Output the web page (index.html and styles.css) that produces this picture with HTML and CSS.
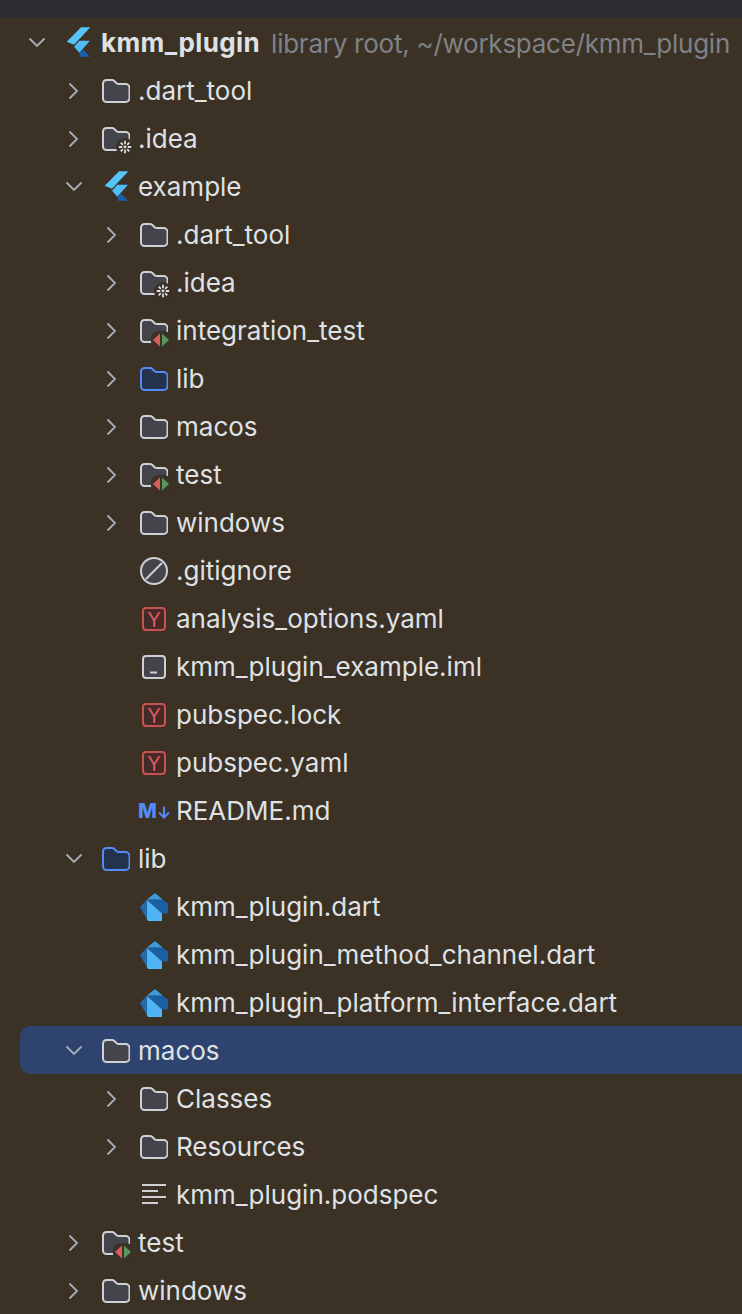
FILE: index.html
```html
<!DOCTYPE html>
<html lang="en">
<head>
<meta charset="utf-8">
<title>Project tree</title>
<link rel="stylesheet" href="styles.css">
</head>
<body>
<svg class="defs" aria-hidden="true">
  <symbol id="folder-shape" viewBox="0 0 28 24">
    <path d="M1 4.500a3.500 3.500 0 0 1 3.500-3.500h5.600a3 3 0 0 1 2 .8l2.600 2.400a3 3 0 0 0 2 .8h6.800a4 4 0 0 1 4 4V19a4 4 0 0 1-4 4H4.500A3.500 3.500 0 0 1 1 19.500z"/>
  </symbol>
  <symbol id="flutter" viewBox="0 0 28 32">
    <polygon class="fl-light" points="16,0.300 25.400,0.300 9,17.800 1.700,14.700"/>
    <polygon class="fl-mid" points="14.300,13.700 25,13.700 14.300,25.700 9,19.700"/>
    <polygon class="fl-dark" points="14.300,25.700 18.300,22.500 25,29.700 15,29.700"/>
  </symbol>
  <symbol id="dart" viewBox="0 0 28 28">
    <polygon class="d-top" points="6.700,6.700 15,0 23,6.700"/>
    <polygon class="d-right" points="6.700,6.700 23,6.700 28,10.500 28,20.500 22,20.500"/>
    <polygon class="d-light" points="6.700,6.700 22,20.500 22,28 8,28 6.700,26"/>
    <polygon class="d-left" points="0,14 6.700,6.700 6.700,26"/>
  </symbol>
  <symbol id="yaml" viewBox="0 0 24 24">
    <rect class="y-box" x="1" y="1" width="22" height="22" rx="3"/>
    <text class="y-letter" x="12" y="19.500">Y</text>
  </symbol>
  <symbol id="arrow-down" viewBox="0 0 24 24">
    <path d="M4.500 7.500l7.500 7.500 7.500-7.500"/>
  </symbol>
  <symbol id="arrow-right" viewBox="0 0 24 24">
    <path d="M7.500 4.500l7.500 7.500-7.500 7.500"/>
  </symbol>
  <symbol id="gear" viewBox="0 0 16 16">
    <circle class="cut" cx="8" cy="8" r="8"/>
    <circle class="hub" cx="8" cy="8" r="1.300"/>
    <path d="M8 2.500v3M8 10.500v3M2.500 8h3M10.500 8h3M4.200 4.200l1.900 1.900M9.900 9.900l1.900 1.900M11.800 4.200L9.900 6.100M6.100 9.900l-1.900 1.900"/>
  </symbol>
  <symbol id="test-badge" viewBox="0 0 20 18">
    <rect class="cut" x="0" y="0" width="20" height="18" rx="7"/>
    <polygon class="t-red" points="9,2.500 9,15.500 2,9"/>
    <polygon class="t-green" points="11,2.500 11,15.500 18,9"/>
  </symbol>
</svg>

<div class="topbar"></div>
<ul class="tree">
  <li class="row l0">
    <svg class="chev"><use href="#arrow-down"/></svg>
    <svg class="ico tall"><use href="#flutter"/></svg>
    <span class="name root">kmm_plugin</span><span class="hint">library root, ~/workspace/kmm_plugin</span>
  </li>
  <li class="row l1">
    <svg class="chev"><use href="#arrow-right"/></svg>
    <svg class="ico folder"><use href="#folder-shape"/></svg>
    <span class="name">.dart_tool</span>
  </li>
  <li class="row l1">
    <svg class="chev"><use href="#arrow-right"/></svg>
    <span class="ico-wrap">
      <svg class="ico folder"><use href="#folder-shape"/></svg>
      <svg class="badge-gear"><use href="#gear"/></svg>
    </span>
    <span class="name">.idea</span>
  </li>
  <li class="row l1">
    <svg class="chev"><use href="#arrow-down"/></svg>
    <svg class="ico tall nudge"><use href="#flutter"/></svg>
    <span class="name">example</span>
  </li>
  <li class="row l2">
    <svg class="chev"><use href="#arrow-right"/></svg>
    <svg class="ico folder"><use href="#folder-shape"/></svg>
    <span class="name">.dart_tool</span>
  </li>
  <li class="row l2">
    <svg class="chev"><use href="#arrow-right"/></svg>
    <span class="ico-wrap">
      <svg class="ico folder"><use href="#folder-shape"/></svg>
      <svg class="badge-gear"><use href="#gear"/></svg>
    </span>
    <span class="name">.idea</span>
  </li>
  <li class="row l2">
    <svg class="chev"><use href="#arrow-right"/></svg>
    <span class="ico-wrap">
      <svg class="ico folder"><use href="#folder-shape"/></svg>
      <svg class="badge-test"><use href="#test-badge"/></svg>
    </span>
    <span class="name">integration_test</span>
  </li>
  <li class="row l2">
    <svg class="chev"><use href="#arrow-right"/></svg>
    <svg class="ico folder src"><use href="#folder-shape"/></svg>
    <span class="name">lib</span>
  </li>
  <li class="row l2">
    <svg class="chev"><use href="#arrow-right"/></svg>
    <svg class="ico folder"><use href="#folder-shape"/></svg>
    <span class="name">macos</span>
  </li>
  <li class="row l2">
    <svg class="chev"><use href="#arrow-right"/></svg>
    <span class="ico-wrap">
      <svg class="ico folder"><use href="#folder-shape"/></svg>
      <svg class="badge-test"><use href="#test-badge"/></svg>
    </span>
    <span class="name">test</span>
  </li>
  <li class="row l2">
    <svg class="chev"><use href="#arrow-right"/></svg>
    <svg class="ico folder"><use href="#folder-shape"/></svg>
    <span class="name">windows</span>
  </li>
  <li class="row l2">
    <span class="chev"></span>
    <svg class="ico ignore" viewBox="0 0 28 28"><circle cx="14" cy="14" r="13"/><path d="M6 22L22 6"/></svg>
    <span class="name">.gitignore</span>
  </li>
  <li class="row l2">
    <span class="chev"></span>
    <span class="ico-center"><svg class="file"><use href="#yaml"/></svg></span>
    <span class="name">analysis_options.yaml</span>
  </li>
  <li class="row l2">
    <span class="chev"></span>
    <span class="ico-center"><svg class="file iml" viewBox="0 0 24 24"><rect x="1" y="1" width="22" height="22" rx="3"/><path d="M8 17.500h7"/></svg></span>
    <span class="name">kmm_plugin_example.iml</span>
  </li>
  <li class="row l2">
    <span class="chev"></span>
    <span class="ico-center"><svg class="file"><use href="#yaml"/></svg></span>
    <span class="name">pubspec.lock</span>
  </li>
  <li class="row l2">
    <span class="chev"></span>
    <span class="ico-center"><svg class="file"><use href="#yaml"/></svg></span>
    <span class="name">pubspec.yaml</span>
  </li>
  <li class="row l2">
    <span class="chev"></span>
    <span class="ico-md"><span class="md-m">M</span><svg class="md-arrow" viewBox="0 0 12 13"><path d="M6 .5v11M1 6.500l5 5 5-5"/></svg></span>
    <span class="name">README.md</span>
  </li>
  <li class="row l1">
    <svg class="chev"><use href="#arrow-down"/></svg>
    <svg class="ico folder src"><use href="#folder-shape"/></svg>
    <span class="name">lib</span>
  </li>
  <li class="row l2">
    <span class="chev"></span>
    <svg class="ico dart"><use href="#dart"/></svg>
    <span class="name">kmm_plugin.dart</span>
  </li>
  <li class="row l2">
    <span class="chev"></span>
    <svg class="ico dart"><use href="#dart"/></svg>
    <span class="name">kmm_plugin_method_channel.dart</span>
  </li>
  <li class="row l2">
    <span class="chev"></span>
    <svg class="ico dart"><use href="#dart"/></svg>
    <span class="name">kmm_plugin_platform_interface.dart</span>
  </li>
  <li class="row l1 selected">
    <svg class="chev"><use href="#arrow-down"/></svg>
    <svg class="ico folder"><use href="#folder-shape"/></svg>
    <span class="name">macos</span>
  </li>
  <li class="row l2">
    <svg class="chev"><use href="#arrow-right"/></svg>
    <svg class="ico folder"><use href="#folder-shape"/></svg>
    <span class="name">Classes</span>
  </li>
  <li class="row l2">
    <svg class="chev"><use href="#arrow-right"/></svg>
    <svg class="ico folder"><use href="#folder-shape"/></svg>
    <span class="name">Resources</span>
  </li>
  <li class="row l2">
    <span class="chev"></span>
    <svg class="ico lines" viewBox="0 0 28 24"><path d="M2 2h24M2 8h16M2 14h24M2 20h16"/></svg>
    <span class="name">kmm_plugin.podspec</span>
  </li>
  <li class="row l1">
    <svg class="chev"><use href="#arrow-right"/></svg>
    <span class="ico-wrap">
      <svg class="ico folder"><use href="#folder-shape"/></svg>
      <svg class="badge-test"><use href="#test-badge"/></svg>
    </span>
    <span class="name">test</span>
  </li>
  <li class="row l1">
    <svg class="chev"><use href="#arrow-right"/></svg>
    <svg class="ico folder"><use href="#folder-shape"/></svg>
    <span class="name">windows</span>
  </li>
</ul>
</body>
</html>
```

FILE: styles.css
```css
* { box-sizing: border-box; }
html, body {
  margin: 0;
  height: 1314px;
  overflow: hidden;
  background: #3b3124;
}
body {
  font-family: Inter, "Liberation Sans", sans-serif;
  font-size: 26px;
  color: #dfe1e5;
}
.defs { display: none; }
.topbar { height: 18px; background: #2b2d30; }
.tree { list-style: none; margin: 1px 0 0; padding: 0; }
.row {
  display: flex;
  align-items: center;
  height: 48px;
  white-space: nowrap;
}
.l0 { padding-left: 25px; }
.l1 { padding-left: 62px; }
.l2 { padding-left: 100px; }
.selected {
  margin: -1px 0 1px 20px;
  padding: 2px 0 0 42px;
  background: #2e436e;
  border-radius: 10px 0 0 10px;
}
.chev {
  flex: none;
  width: 24px;
  height: 24px;
  margin-right: 16px;
  fill: none;
  stroke: #a8adbd;
  stroke-width: 1.8;
}
.ico { flex: none; width: 28px; height: 24px; margin-right: 8px; }
.tall { height: 32px; }
.nudge { transform: translateX(1px); }
.dart { height: 28px; }
.folder { fill: #43454a; stroke: #ced0d6; stroke-width: 2; }
.folder.src { fill: #25324d; stroke: #548af7; }
.ico-wrap { position: relative; flex: none; display: flex; }
.badge-gear {
  position: absolute; right: 4px; bottom: -5px;
  width: 18px; height: 18px;
  fill: none; stroke: #dfe1e5; stroke-width: 1.6;
}
.cut { fill: #3b3124; stroke: none; }
.hub { fill: #dfe1e5; stroke: none; }
.badge-test {
  position: absolute; right: 5px; bottom: -5.5px;
  width: 20px; height: 18px;
}
.t-red { fill: #db5c5c; }
.t-green { fill: #57965c; }
.fl-light { fill: #54c5f8; }
.fl-mid { fill: #4fbdf5; }
.fl-dark { fill: #1d5fa6; }
.d-top { fill: #3d9ad9; }
.d-right { fill: #1c5ea3; }
.d-light { fill: #4db5f5; }
.d-left { fill: #1f6cb0; }
.ico-center {
  flex: none;
  display: flex;
  justify-content: center;
  width: 28px;
  margin-right: 8px;
}
.file { width: 24px; height: 24px; }
.y-box { fill: #462a29; stroke: #c75450; stroke-width: 2; }
.y-letter {
  font-family: Inter, "Liberation Sans", sans-serif;
  font-size: 20px;
  text-anchor: middle;
  fill: #db5c5c;
}
.iml rect { fill: #43454a; stroke: #ced0d6; stroke-width: 2; }
.iml path { fill: none; stroke: #ced0d6; stroke-width: 2; }
.ignore { height: 28px; fill: #43454a; stroke: #ced0d6; stroke-width: 2; }
.lines { fill: none; stroke: #ced0d6; stroke-width: 1.8; }
.ico-md {
  flex: none;
  display: flex;
  align-items: flex-end;
  width: 30px;
  margin-right: 8px;
  margin-left: -2px;
  color: #548af7;
  font-weight: 800;
  font-size: 20px;
  letter-spacing: -0.5px;
}
.md-m { line-height: 15px; }
.md-arrow {
  flex: none;
  width: 12px;
  height: 13px;
  margin-left: 2px;
  fill: none;
  stroke: #548af7;
  stroke-width: 2;
}
.name { line-height: 1; }
.root { font-weight: 700; letter-spacing: 0.4px; }
.hint { margin-left: 11px; color: #7f8288; letter-spacing: -0.25px; }
```
